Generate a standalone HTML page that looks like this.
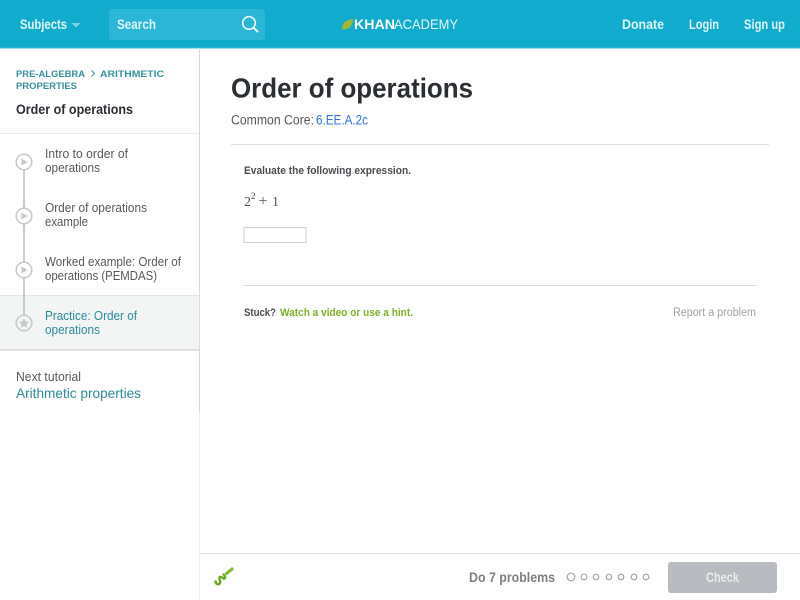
<!DOCTYPE html>
<html><head><meta charset="utf-8"><title>Order of operations</title>
<style>
html,body{margin:0;padding:0;width:800px;height:600px;overflow:hidden;background:#fff}
svg{display:block;position:absolute;left:0;top:0}
text{font-family:"Liberation Sans",sans-serif}
text.m{font-family:"Liberation Serif",serif}
</style></head><body>
<svg width="800" height="600" viewBox="0 0 800 600" xmlns="http://www.w3.org/2000/svg">
<rect width="800" height="48" fill="#11accd"/>
<rect y="47.5" width="800" height="1" fill="#3fbcd8"/>
<text x="20" y="29" font-size="13.5" font-weight="700" fill="#e0f4f8" textLength="47" lengthAdjust="spacingAndGlyphs">Subjects</text>
<path d="M71.500 23h9l-4.500 4.500z" fill="#7fd0e4"/>
<rect x="109" y="9" width="156" height="31" rx="3" fill="#2bb6d6"/>
<text x="117" y="29" font-size="13.500" font-weight="700" fill="#e0f4f8" textLength="39" lengthAdjust="spacingAndGlyphs">Search</text>
<circle cx="249" cy="23" r="6.300" fill="none" stroke="#f2fbfd" stroke-width="1.600"/>
<path d="M253.500 27.500l4 4" stroke="#f2fbfd" stroke-width="2" stroke-linecap="round"/>
<path d="M342.500 29.500c-2-5 3-10 10.500-10.500c0 6.500-4 11-10.500 10.500z" fill="#9cb83a"/>
<text x="354" y="29" font-size="14" font-weight="700" fill="#fff" textLength="41" lengthAdjust="spacingAndGlyphs">KHAN</text>
<text x="394" y="29" font-size="14" fill="#e6f6fa" textLength="64" lengthAdjust="spacingAndGlyphs">ACADEMY</text>
<text x="622" y="29" font-size="13.500" font-weight="700" fill="#e0f4f8" textLength="42" lengthAdjust="spacingAndGlyphs">Donate</text>
<text x="689" y="29" font-size="13.500" font-weight="700" fill="#e0f4f8" textLength="30" lengthAdjust="spacingAndGlyphs">Login</text>
<text x="744" y="29" font-size="13.500" font-weight="700" fill="#e0f4f8" textLength="41" lengthAdjust="spacingAndGlyphs">Sign up</text>

<rect x="199" y="48" width="1" height="365" fill="#d8d9da"/>
<rect x="199" y="413" width="1" height="187" fill="#f0f0f1"/>
<text x="16" y="77" font-size="9.500" font-weight="700" fill="#3a8f9d" textLength="69" lengthAdjust="spacingAndGlyphs">PRE-ALGEBRA</text>
<path d="M91.500 70.500l3 3-3 3" fill="none" stroke="#3a8f9d" stroke-width="1"/>
<text x="100" y="77" font-size="9.500" font-weight="700" fill="#3a8f9d" textLength="64" lengthAdjust="spacingAndGlyphs">ARITHMETIC</text>
<text x="16" y="89" font-size="9.500" font-weight="700" fill="#3a8f9d" textLength="61" lengthAdjust="spacingAndGlyphs">PROPERTIES</text>
<text x="16" y="114" font-size="13.500" font-weight="700" fill="#2b2e33" textLength="117" lengthAdjust="spacingAndGlyphs">Order of operations</text>
<rect x="0" y="133" width="199" height="1" fill="#eaebec"/>

<rect x="0" y="295" width="199" height="55" fill="#f3f5f5"/>
<rect x="0" y="295" width="199" height="1" fill="#e3e4e5"/>
<rect x="0" y="349" width="199" height="2" fill="#dcdddd"/>

<rect x="23.200" y="170" width="1.600" height="145" fill="#c0c1c2"/>
<g fill="#fff" stroke="#c6c7c8" stroke-width="1.500">
<circle cx="24" cy="162" r="7.800"/><circle cx="24" cy="216" r="7.800"/><circle cx="24" cy="270" r="7.800"/>
<circle cx="24" cy="323" r="7.800" fill="#f3f5f5"/>
</g>
<g fill="#c6c7c8">
<path d="M21.500 158.500v7l6-3.500z"/><path d="M21.500 212.500v7l6-3.500z"/><path d="M21.500 266.500v7l6-3.500z"/>
<path d="M24 318l1.500 3.400 3.600.3-2.700 2.400.8 3.600-3.200-1.900-3.200 1.900.8-3.600-2.700-2.400 3.600-.3z"/>
</g>
<g font-size="12.800" fill="#55585c">
<text x="45" y="158" textLength="83" lengthAdjust="spacingAndGlyphs">Intro to order of</text>
<text x="45" y="172" textLength="55" lengthAdjust="spacingAndGlyphs">operations</text>
<text x="45" y="212" textLength="102" lengthAdjust="spacingAndGlyphs">Order of operations</text>
<text x="45" y="226" textLength="43" lengthAdjust="spacingAndGlyphs">example</text>
<text x="45" y="266" textLength="136" lengthAdjust="spacingAndGlyphs">Worked example: Order of</text>
<text x="45" y="280" textLength="112" lengthAdjust="spacingAndGlyphs">operations (PEMDAS)</text>
</g>
<g font-size="12.800" fill="#2d8a99">
<text x="45" y="320" textLength="92" lengthAdjust="spacingAndGlyphs">Practice: Order of</text>
<text x="45" y="334" textLength="55" lengthAdjust="spacingAndGlyphs">operations</text>
</g>
<text x="16" y="381" font-size="12.800" fill="#55585c" textLength="65" lengthAdjust="spacingAndGlyphs">Next tutorial</text>
<text x="16" y="398" font-size="14" fill="#2d8a99" textLength="125" lengthAdjust="spacingAndGlyphs">Arithmetic properties</text>

<text x="231" y="97.500" font-size="28" font-weight="700" fill="#2b2e33" textLength="242" lengthAdjust="spacingAndGlyphs">Order of operations</text>
<text x="231" y="124.500" font-size="13.500" fill="#55585c" textLength="83" lengthAdjust="spacingAndGlyphs">Common Core:</text>
<text x="316" y="124.500" font-size="13.500" fill="#2e6fd8" textLength="52" lengthAdjust="spacingAndGlyphs">6.EE.A.2c</text>
<rect x="231" y="144" width="538" height="1" fill="#dcddde"/>
<text x="244" y="174" font-size="11.300" font-weight="700" fill="#4a4d51" textLength="167" lengthAdjust="spacingAndGlyphs">Evaluate the following expression.</text>
<g fill="#555">
<text class="m" x="244" y="206" font-size="14">2</text>
<text class="m" x="251" y="199" font-size="9">2</text>
<text class="m" x="258.500" y="206" font-size="16">+</text>
<text class="m" x="272" y="206" font-size="14">1</text>
</g>
<rect x="244" y="227.500" width="62" height="15" fill="#fff" stroke="#d0d1d2"/>
<rect x="244" y="285" width="512" height="1" fill="#dcddde"/>
<text x="244" y="316" font-size="11.300" font-weight="700" fill="#4a4d51" textLength="32" lengthAdjust="spacingAndGlyphs">Stuck?</text>
<text x="280" y="316" font-size="11.300" font-weight="700" fill="#7fb02a" textLength="133" lengthAdjust="spacingAndGlyphs">Watch a video or use a hint.</text>
<text x="673" y="316" font-size="11.500" fill="#a0a2a5" textLength="83" lengthAdjust="spacingAndGlyphs">Report a problem</text>

<rect x="200" y="553" width="600" height="1" fill="#dcddde"/>
<path d="M215.500 581.500c.5 3 3.500 3.500 4.500 1.500s-2-5 0-6 3 2.500 4.500 1.500c1-.8.500-3-1-4" fill="none" stroke="#69a81a" stroke-width="2.400" stroke-linecap="round"/>
<path d="M226.500 573.500l5.500-4.500" stroke="#86bb34" stroke-width="3.200" stroke-linecap="round"/>
<text x="469" y="582" font-size="14" font-weight="700" fill="#7c7f83" textLength="86" lengthAdjust="spacingAndGlyphs">Do 7 problems</text>
<g fill="none" stroke="#a2a4a7" stroke-width="1.200">
<circle cx="571" cy="577" r="3.800"/><circle cx="584" cy="577" r="2.800"/><circle cx="596" cy="577" r="2.800"/><circle cx="609" cy="577" r="2.800"/><circle cx="621" cy="577" r="2.800"/><circle cx="634" cy="577" r="2.800"/><circle cx="646" cy="577" r="2.800"/>
</g>
<rect x="668" y="562" width="109" height="31" rx="3" fill="#b8bbbf"/>
<text x="706" y="582" font-size="13.500" font-weight="700" fill="#e8eaec" textLength="33" lengthAdjust="spacingAndGlyphs">Check</text>
</svg>
</body></html>
